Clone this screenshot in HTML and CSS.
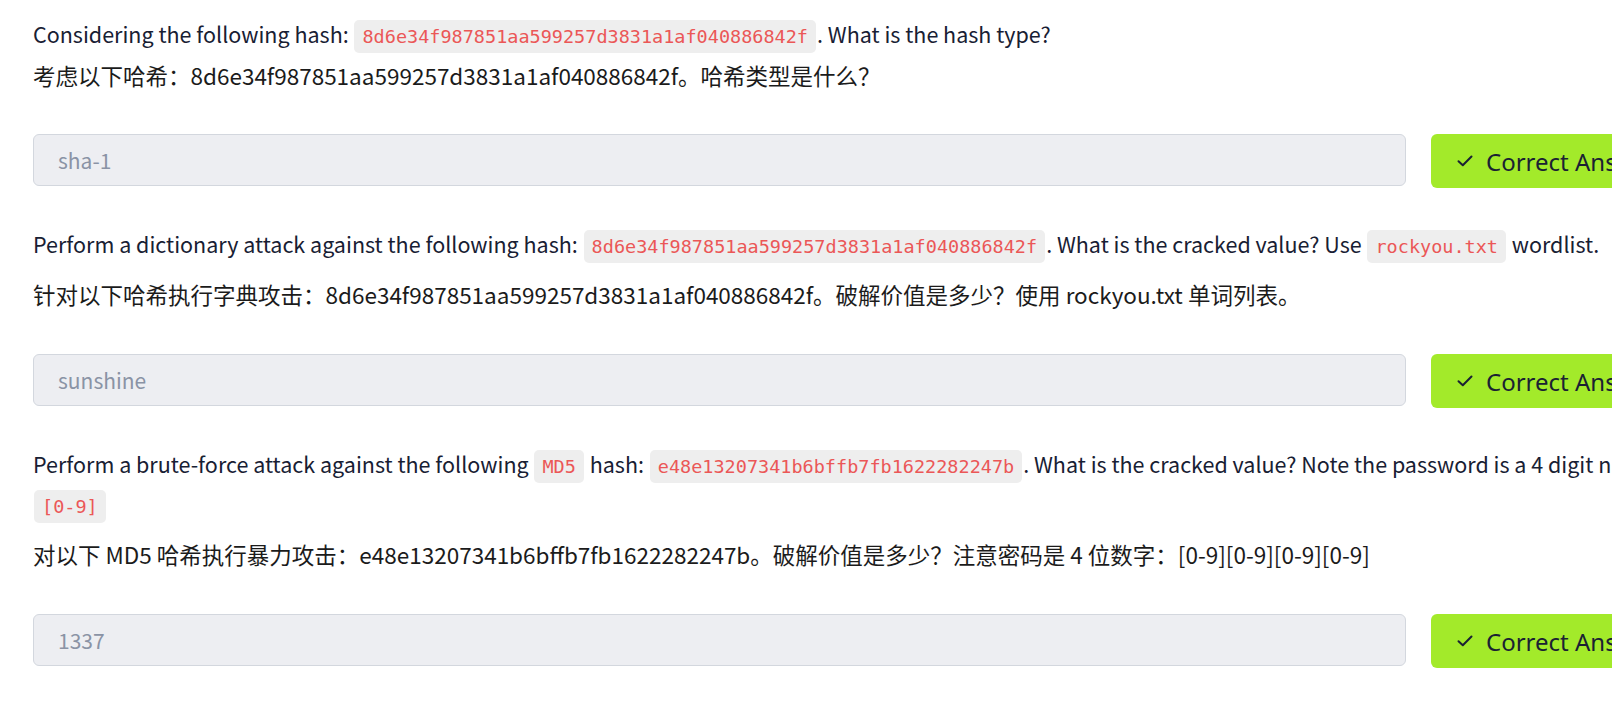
FILE: index.html
```html
<!DOCTYPE html>
<html lang="en">
<head>
<meta charset="utf-8">
<title>Hash questions</title>
<link rel="stylesheet" href="styles.css">
</head>
<body>
<main class="tasks">
  <section class="question question--first">
    <p class="q-en">Considering the following hash: <code>8d6e34f987851aa599257d3831a1af040886842f</code>. What is the hash type?</p>
    <p class="q-zh">考虑以下哈希：8d6e34f987851aa599257d3831a1af040886842f。哈希类型是什么？</p>
    <div class="answer-row">
      <div class="answer-input">sha-1</div>
      <button class="btn-correct" type="button">
        <svg class="check" width="16" height="12" viewBox="0 0 16 12" aria-hidden="true"><path d="M1.5 6.2 L5.8 10.3 L14.5 1.5" fill="none" stroke="currentColor" stroke-width="2" stroke-linecap="round" stroke-linejoin="round"/></svg>
        <span>Correct Answer</span>
      </button>
    </div>
  </section>

  <section class="question">
    <p class="q-en">Perform a dictionary attack against the following hash: <code>8d6e34f987851aa599257d3831a1af040886842f</code>. What is the cracked value? Use <code>rockyou.txt</code> wordlist.</p>
    <p class="q-zh">针对以下哈希执行字典攻击：8d6e34f987851aa599257d3831a1af040886842f。破解价值是多少？使用 rockyou.txt 单词列表。</p>
    <div class="answer-row">
      <div class="answer-input">sunshine</div>
      <button class="btn-correct" type="button">
        <svg class="check" width="16" height="12" viewBox="0 0 16 12" aria-hidden="true"><path d="M1.5 6.2 L5.8 10.3 L14.5 1.5" fill="none" stroke="currentColor" stroke-width="2" stroke-linecap="round" stroke-linejoin="round"/></svg>
        <span>Correct Answer</span>
      </button>
    </div>
  </section>

  <section class="question">
    <p class="q-en q-en--nowrap">Perform a brute-force attack against the following <code>MD5</code> hash: <code>e48e13207341b6bffb7fb1622282247b</code>. What is the cracked value? Note the password is a 4 digit number: <code>[0-9]</code><code>[0-9]</code><code>[0-9]</code><br><code>[0-9]</code></p>
    <p class="q-zh">对以下 MD5 哈希执行暴力攻击：e48e13207341b6bffb7fb1622282247b。破解价值是多少？注意密码是 4 位数字：[0-9][0-9][0-9][0-9]</p>
    <div class="answer-row">
      <div class="answer-input">1337</div>
      <button class="btn-correct" type="button">
        <svg class="check" width="16" height="12" viewBox="0 0 16 12" aria-hidden="true"><path d="M1.5 6.2 L5.8 10.3 L14.5 1.5" fill="none" stroke="currentColor" stroke-width="2" stroke-linecap="round" stroke-linejoin="round"/></svg>
        <span>Correct Answer</span>
      </button>
    </div>
  </section>
</main>
</body>
</html>
```

FILE: styles.css
```css
html, body {
  margin: 0;
  padding: 0;
  overflow: hidden;
  background: #ffffff;
}

body {
  font-family: "Noto Sans CJK SC", "Noto Sans", sans-serif;
  color: #1a2133;
}

.tasks {
  width: 1660px;
  padding: 14px 0 0 33px;
}

.question {
  margin-bottom: 36px;
}

.q-en {
  margin: 0;
  font-size: 21.5px;
  line-height: 40px;
  color: #182033;
}

.q-en--nowrap {
  white-space: nowrap;
}

.q-en code {
  font-family: "DejaVu Sans Mono", "Liberation Mono", monospace;
  font-size: 18.5px;
  line-height: 1;
  color: #eb5757;
  background: #eeeeee;
  border-radius: 5px;
  padding: 6px 8px;
  margin: 0 1px;
}

.q-zh {
  margin: 12px 0 0;
  font-size: 22.5px;
  line-height: 36px;
  color: #1b1b1b;
}

.question--first .q-zh {
  margin-top: 3px;
}

.answer-row {
  display: flex;
  align-items: flex-start;
  gap: 25px;
  margin-top: 42px;
}

.question--first .answer-row {
  margin-top: 41px;
}

.answer-input {
  flex: 1;
  box-sizing: border-box;
  height: 52px;
  display: flex;
  align-items: center;
  padding-left: 24px;
  border: 1px solid #d3d7de;
  border-radius: 6px;
  background: #edeef2;
  font-size: 21px;
  color: #8a93a5;
}

.btn-correct {
  flex: 0 0 262px;
  height: 54px;
  display: flex;
  align-items: center;
  gap: 13px;
  padding: 0 0 0 26px;
  border: none;
  border-radius: 6px;
  background: #a3ea2a;
  color: #1a2133;
  font-family: "Noto Sans", "Lato", sans-serif;
  font-size: 24px;
  cursor: pointer;
}

.check {
  display: block;
  flex: none;
}
```
